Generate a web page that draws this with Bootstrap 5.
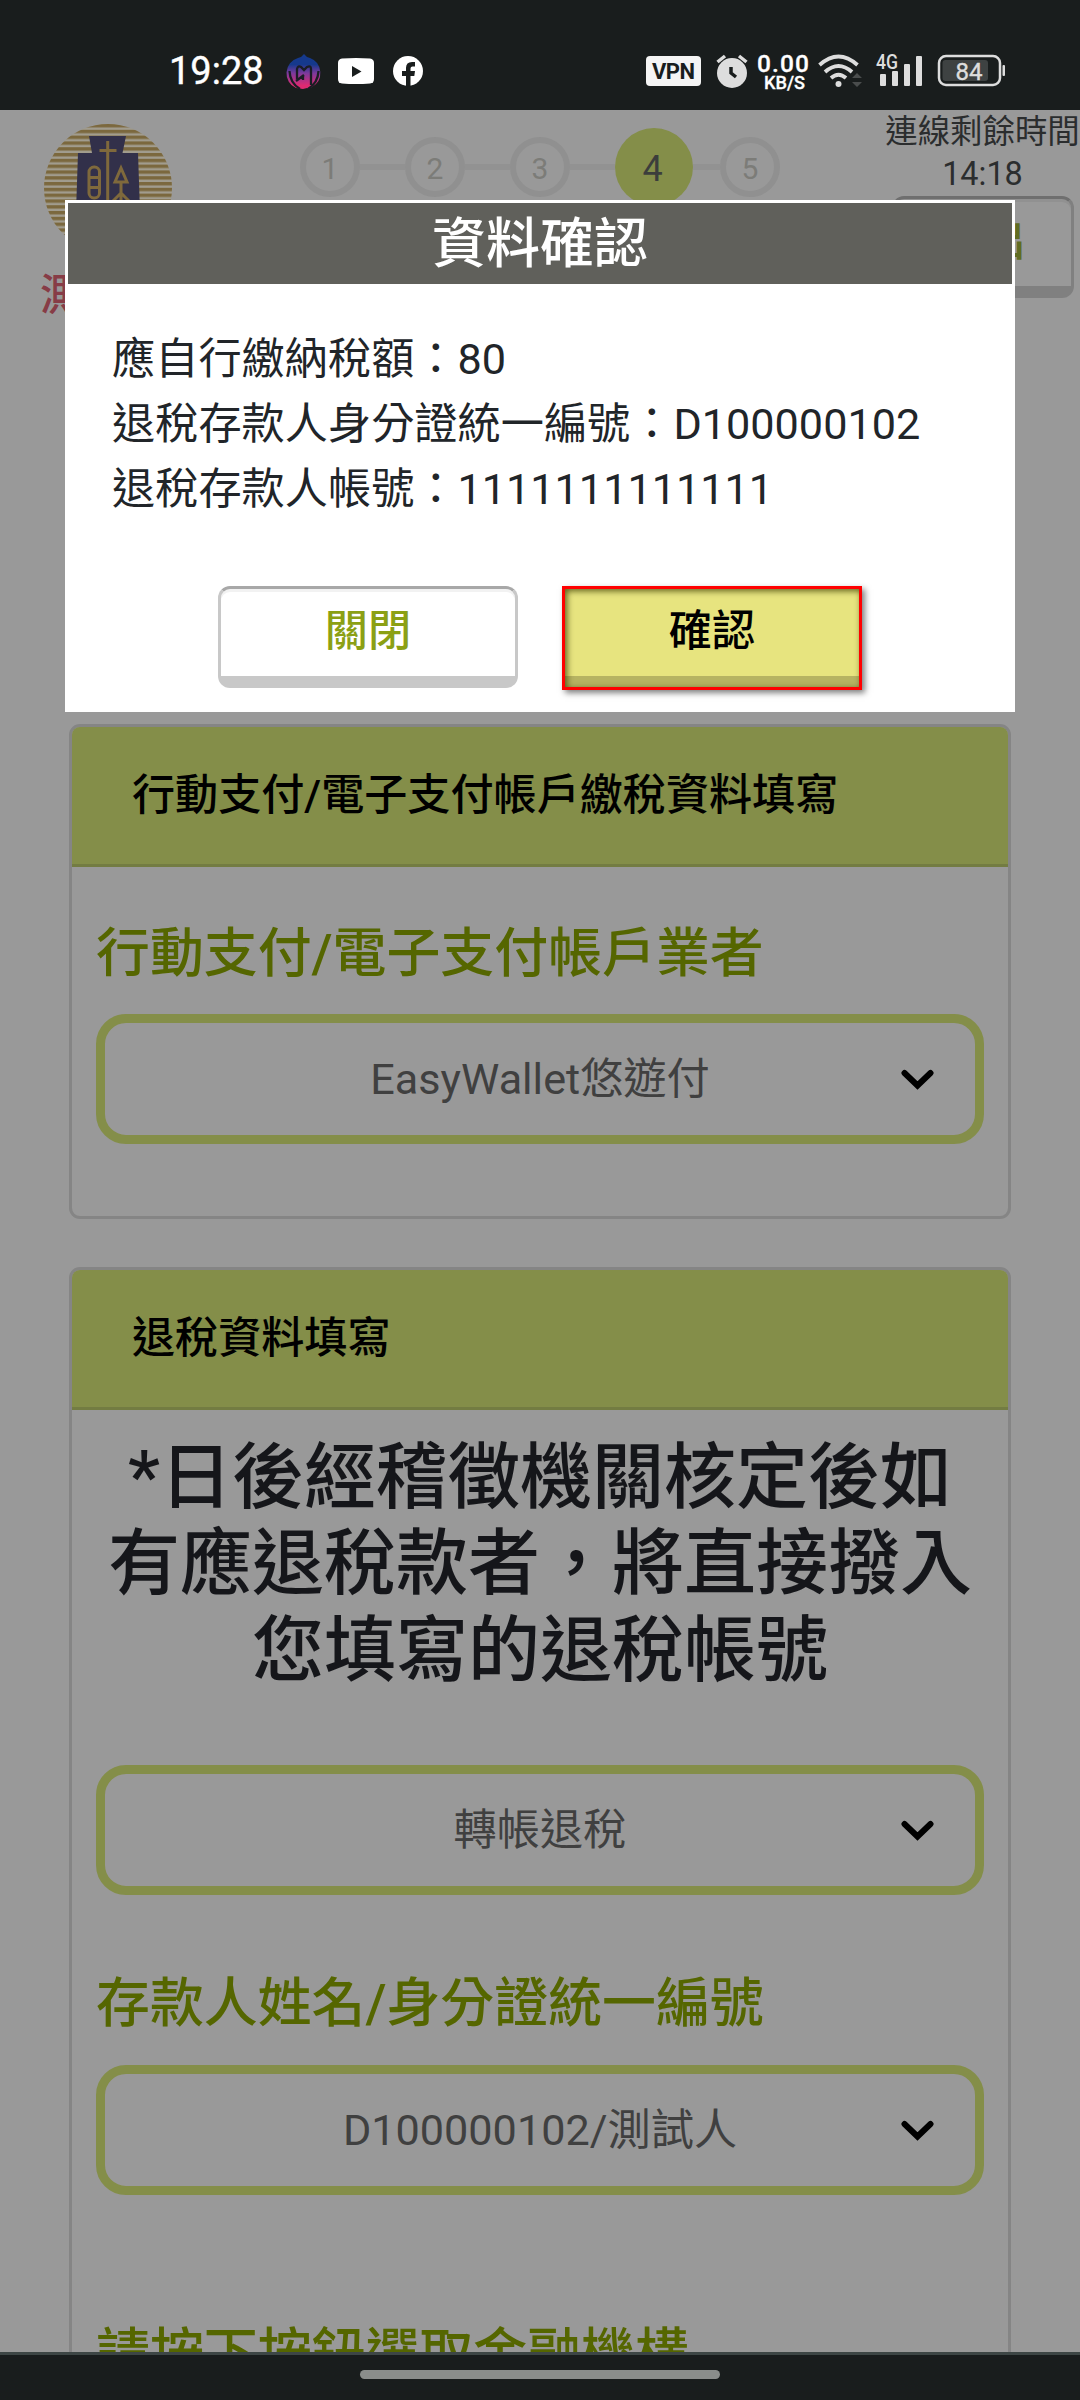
<!DOCTYPE html>
<html lang="zh-Hant">
<head>
<meta charset="utf-8">
<meta name="viewport" content="width=device-width, initial-scale=1">
<title>資料確認</title>
<link href="https://cdn.jsdelivr.net/npm/bootstrap@5.3.0/dist/css/bootstrap.min.css" rel="stylesheet">
<style>
body{font-family:Roboto,"Noto Sans CJK TC",sans-serif;font-size:43.2px;line-height:1.5;background:#999;color:#212529;width:1080px;height:2400px;overflow:hidden}
svg{display:block;flex:none}
svg text{font-family:Roboto,"Liberation Sans",sans-serif}
.status-bar{height:110px;background:#191d1d;color:#fff;padding:40px 70px 0 169px}
.clock{font-size:38px;line-height:62px;width:111px;-webkit-text-stroke:.4px #fff}
.top-area{height:614px}
.brand{width:132px;margin-left:41px;padding-top:11px}
.brand-text{color:#873c46;line-height:64px;margin:11px 0 0 -1px;font-weight:500}
.steps{width:480px;height:78px;margin:18px 0 0 127px}
.step-line{width:45px;height:6px;background:#929292}
.step-line.short{width:27px}
.step-dot{width:60px;height:60px;border:6px solid #909090;border-radius:50%;font-size:30px;color:#7c7c78;line-height:1;padding-top:4px}
.step-dot.now{width:78px;height:78px;border:0;background:#848e49;color:#3c3e3c;font-size:36px;padding-right:3px}
.timer{width:195px;margin-left:105px;padding-top:1px;font-size:32.4px;line-height:42px;color:#2b2d2e}
.btn-key{--bs-btn-border-radius:12px;--bs-btn-padding-y:0;--bs-btn-line-height:1;width:300px;height:102px;font-size:43.2px;font-weight:500;color:#8ba014;background:#fff;border:3px solid #c8c8c8;border-top-color:#a8a8a8;border-bottom:12px solid #c8c8c8;box-shadow:inset 0 3px 0 #f2f2f2;padding-bottom:1px}
.btn-exit{width:182px;margin-top:1px;color:#606c22;background:#999;border-color:#808080;border-top-color:#6f6f6f;box-shadow:inset 0 3px 0 #919191}
.btn-ok{--bs-btn-border-radius:0;height:104px;color:#000;background:linear-gradient(#e7e47f 0 87px,#b6b362 87px);border:3px solid #f00;padding-bottom:12px;box-shadow:3px 3px 6px rgba(0,0,0,.5),inset 2px 2px 6px rgba(60,60,0,.8)}
.panel{--bs-card-border-radius:11px;--bs-card-inner-border-radius:8px;--bs-card-border-width:3px;--bs-card-border-color:#858585;--bs-card-bg:#999;--bs-card-cap-bg:#848e49;margin:0 69px}
.panel .card-header{height:140px;padding:0 60px;border-bottom:3px solid #737c42;color:#000;font-size:43.1px;font-weight:500;line-height:138px}
.panel .card-body{padding:0 24px}
.pay-panel{height:495px;margin-bottom:48px}
.refund-panel{height:1200px}
.field-label{font-size:53.9px;line-height:81px;font-weight:500;color:#556600;display:block}
.pay-panel .field-label{margin:46px 0 20px}
.picker{height:130px;border:9px solid #848e49;border-radius:30px;color:#404040;background:#999;line-height:113px}
.picker svg{right:41px;top:46px}
.notice{font-size:72px;line-height:86.4px;font-weight:500;color:#15161a;margin:25px -24px 71px}
.owner-label{margin:68px 0 21px}
.bank-label{margin-top:118px}
.nav-strip{top:2352px;height:48px;background:#191d1d;border-top:3px solid #3d4645;padding-top:15px}
.nav-handle{width:360px;height:9px;border-radius:5px;background:#8a8d8b}
.confirm-box{left:65px;top:200px;width:950px;height:512px;background:#fff;padding:3px}
.confirm-title{height:81px;background:#60605b;color:#fff;font-size:54px;font-weight:500;line-height:83px}
.confirm-body{padding:43px 44px 0;line-height:65px;height:302px}
.confirm-actions{gap:44px}
</style>
</head>
<body class="position-relative">
<div class="status-bar d-flex">
  <div class="clock">19:28</div>
  <svg width="50" height="60" viewBox="280 40 50 60">
    <defs><linearGradient id="moon" x1="0" y1="0" x2="0" y2="1"><stop offset=".3" stop-color="#15398c"/><stop offset=".55" stop-color="#7c3a9c"/><stop offset=".9" stop-color="#dd2a72"/></linearGradient></defs>
    <path d="M304 54Q306 57 310 58A16 16 0 0 1 312 87Q309 89 307 88L303 89 296 88A16 16 0 0 1 298 58Q302 57 304 54Z" fill="url(#moon)"/>
    <path d="M289.500 71Q290 83 300 89M318.500 71Q318 83 308 89M297 79V69Q298 65 301 67L304 70 307 67Q311 65 311 69V85M296 81L304 75M303 75V80" fill="none" stroke="#1a1d25" stroke-width="2.300"/>
  </svg>
  <svg width="55" height="60" viewBox="330 40 55 60"><path d="M342 58.500Q356 57.500 370 58.500Q374 59 374 63V79Q374 83 370 83.500Q356 84.500 342 83.500Q338 83 338 79V63Q338 59 342 58.500Z" fill="#fff"/><path d="M352 66V77L361.500 71.500Z" fill="#191d1d"/></svg>
  <svg width="50" height="60" viewBox="385 40 50 60"><circle cx="408" cy="71" r="15" fill="#fff"/><path d="M406 87V76H402V71H406V68Q406 62 412 62H415V66.500H412.500Q410.500 66.500 410.500 68.500V71H415L414.300 76H410.500V87Z" fill="#191d1d"/></svg>
  <svg class="ms-auto" width="70" height="60" viewBox="640 40 70 60"><rect x="646" y="56" width="55" height="30" rx="4" fill="#f4f4f4"/><text x="673.500" y="79" font-size="22" font-weight="700" text-anchor="middle" textLength="43" fill="#191d1d">VPN</text></svg>
  <svg width="42" height="60" viewBox="710 40 42 60"><circle cx="732" cy="73" r="15" fill="#ddd"/><path d="M717.500 62L725 56M746.500 62L739 56" stroke="#ddd" stroke-width="3.500"/><path d="M731 67V73L736 77" fill="none" stroke="#191d1d" stroke-width="3.500"/></svg>
  <svg width="62" height="60" viewBox="752 40 62 60" fill="#fff" stroke="#fff" stroke-width=".3" font-weight="500"><text x="783" y="71.500" font-size="24.500" text-anchor="middle" textLength="52">0.00</text><text x="784.500" y="89" font-size="19" text-anchor="middle" textLength="41" lengthAdjust="spacingAndGlyphs">KB/S</text></svg>
  <svg width="56" height="60" viewBox="814 40 56 60" fill="none" stroke="#ddd" stroke-width="3.800"><path d="M819.500 65Q838.500 48 857.500 65M825 72Q838.500 60 852 72M831 78Q838.500 71.500 846 78"/><circle cx="838.500" cy="84" r="3" fill="#ddd" stroke="none"/><path d="M852 78L857 73 862 78ZM852 82H862L857 87Z" fill="#4a4d4d" stroke="none"/></svg>
  <svg width="60" height="60" viewBox="870 40 60 60" fill="#ddd"><text x="876" y="69" font-size="20" font-weight="500" textLength="22" lengthAdjust="spacingAndGlyphs">4G</text><rect x="880" y="74" width="6" height="12" rx="1"/><rect x="892" y="71" width="6" height="15" rx="1"/><rect x="904" y="64" width="6" height="22" rx="1"/><rect x="916" y="56" width="6" height="30" rx="1"/></svg>
  <svg width="80" height="60" viewBox="930 40 80 60"><rect x="939" y="56" width="61" height="29" rx="7" fill="none" stroke="#ddd" stroke-width="2.500"/><rect x="942.500" y="60" width="45.500" height="21" rx="3" fill="#3e4242"/><rect x="1002.500" y="65" width="2.500" height="11" rx="1" fill="#ddd"/><text x="969" y="79.500" font-size="24" text-anchor="middle" fill="#ddd" stroke="#ddd" stroke-width=".4">84</text></svg>
</div>
<div class="top-area d-flex align-items-start">
  <div class="brand">
    <svg width="132" height="132" viewBox="41 121 132 132">
      <defs>
        <pattern id="rays" x="0" y="124" width="10" height="5.800" patternUnits="userSpaceOnUse"><rect width="10" height="3.400" fill="#7b683e"/></pattern>
      </defs>
      <circle cx="108" cy="188" r="64" fill="#a19c8e"/>
      <circle cx="108" cy="188" r="64" fill="url(#rays)"/>
      <path d="M89 136H126L122.500 153H138L140 212H76L78 153H92Z" fill="#32304a"/>
      <g fill="none" stroke="#7f693c" stroke-width="3"><path d="M107.700 141V210M99.500 150.500H116.500"/><rect x="89" y="167" width="10.500" height="31" rx="5"/><path d="M89 177.500H99.500M89 187.500H99.500M121 168L127 182H115ZM121 182V210M112 202L121 193 130 202"/></g>
    </svg>
    <div class="brand-text text-nowrap">測試</div>
  </div>
  <div class="steps d-flex align-items-center">
    <div class="step-dot d-flex align-items-center justify-content-center">1</div><div class="step-line"></div>
    <div class="step-dot d-flex align-items-center justify-content-center">2</div><div class="step-line"></div>
    <div class="step-dot d-flex align-items-center justify-content-center">3</div><div class="step-line"></div>
    <div class="step-dot now d-flex align-items-center justify-content-center">4</div><div class="step-line short"></div>
    <div class="step-dot d-flex align-items-center justify-content-center">5</div>
  </div>
  <div class="timer text-center text-nowrap">連線剩餘時間<br>14:18<br><button class="btn btn-key btn-exit">登出</button></div>
</div>

<div class="card panel pay-panel">
  <div class="card-header">行動支付/電子支付帳戶繳稅資料填寫</div>
  <div class="card-body">
    <label class="field-label">行動支付/電子支付帳戶業者</label>
    <div class="picker position-relative text-center">EasyWallet悠遊付
      <svg class="position-absolute" width="33" height="22" viewBox="0 0 33 22"><path d="M3.500 4L16.500 16.500 29.500 4" fill="none" stroke="#000" stroke-width="6" stroke-linecap="round"/></svg></div>
  </div>
</div>

<div class="card panel refund-panel">
  <div class="card-header">退稅資料填寫</div>
  <div class="card-body">
    <p class="notice text-center">*日後經稽徵機關核定後如<br>有應退稅款者，將直接撥入<br>您填寫的退稅帳號</p>
    <div class="picker position-relative text-center">轉帳退稅
      <svg class="position-absolute" width="33" height="22" viewBox="0 0 33 22"><path d="M3.500 4L16.500 16.500 29.500 4" fill="none" stroke="#000" stroke-width="6" stroke-linecap="round"/></svg></div>
    <label class="field-label owner-label">存款人姓名/身分證統一編號</label>
    <div class="picker position-relative text-center">D100000102/測試人
      <svg class="position-absolute" width="33" height="22" viewBox="0 0 33 22"><path d="M3.500 4L16.500 16.500 29.500 4" fill="none" stroke="#000" stroke-width="6" stroke-linecap="round"/></svg></div>
    <label class="field-label bank-label">請按下按鈕選取金融機構</label>
  </div>
</div>

<div class="confirm-box position-absolute" role="dialog">
  <div class="confirm-title text-center">資料確認</div>
  <div class="confirm-body">應自行繳納稅額：80<br>退稅存款人身分證統一編號：D100000102<br>退稅存款人帳號：1111111111111</div>
  <div class="confirm-actions d-flex justify-content-center">
    <button class="btn btn-key">關閉</button>
    <button class="btn btn-key btn-ok">確認</button>
  </div>
</div>
<div class="nav-strip position-absolute start-0 w-100"><div class="nav-handle mx-auto"></div></div>
</body>
</html>
